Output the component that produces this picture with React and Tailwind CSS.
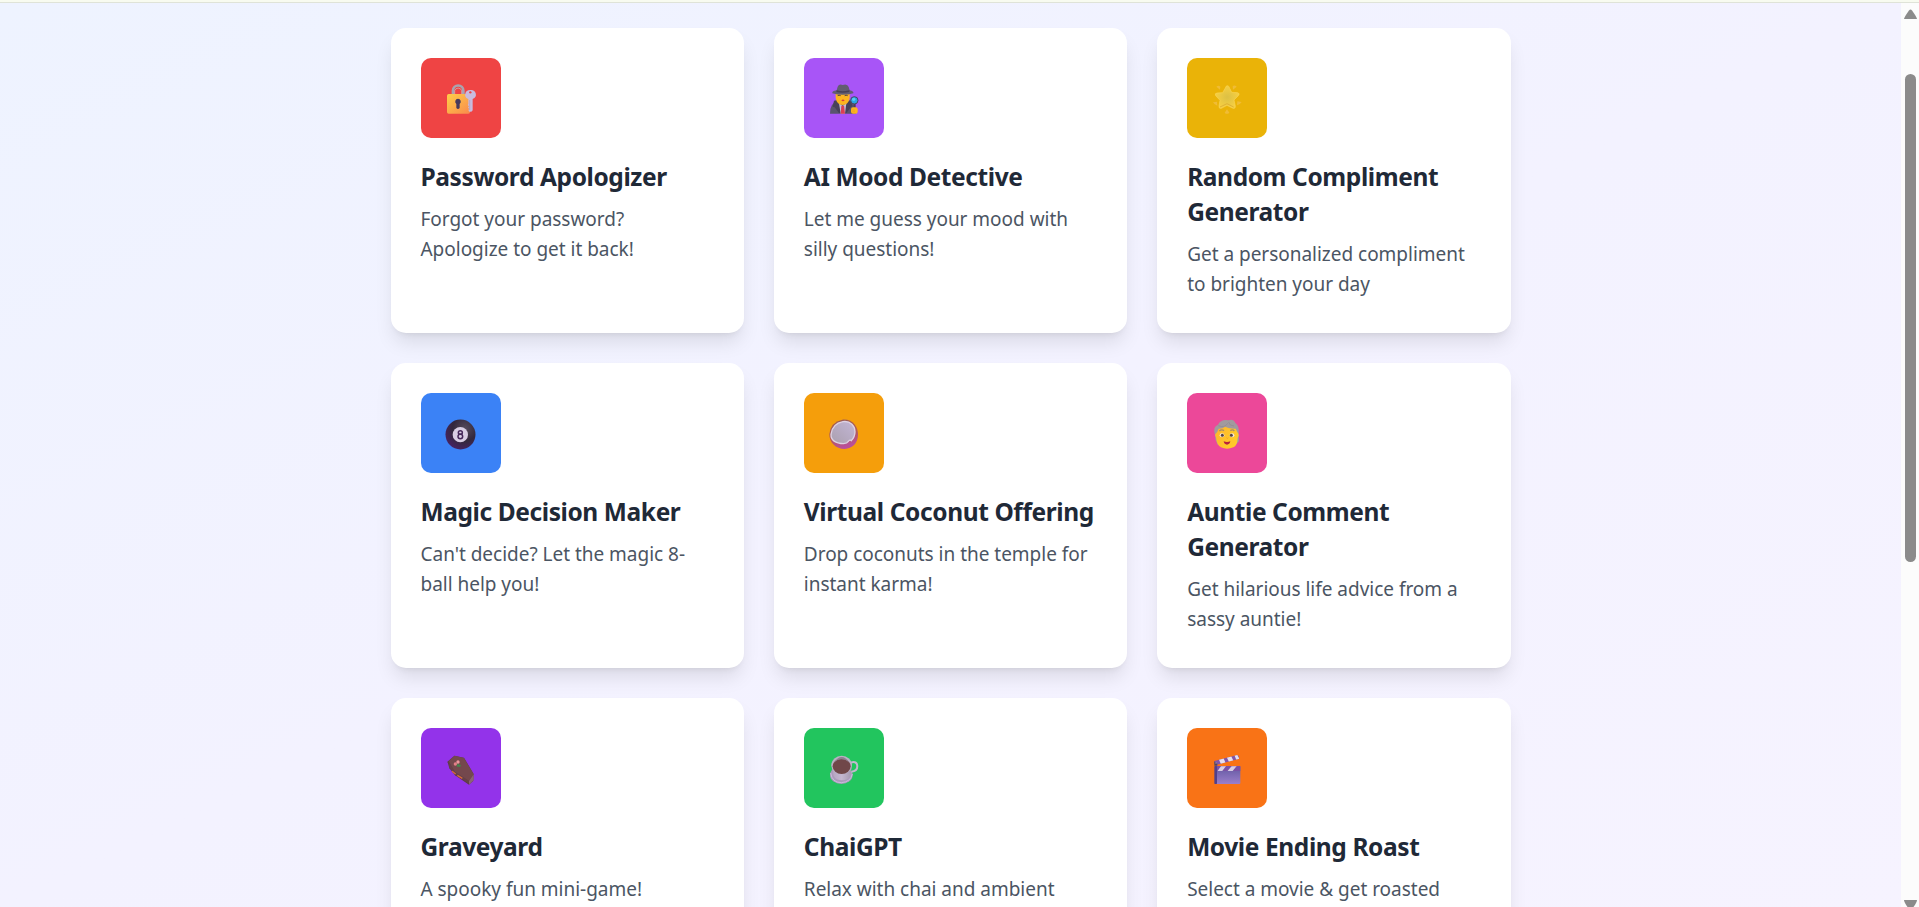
const LockIcon = () => (
  <>
    <defs>
      <linearGradient id="lock" x1="0" y1="0" x2="1" y2="1">
        <stop offset="0" stopColor="#ffcf48" />
        <stop offset="1" stopColor="#f98a4c" />
      </linearGradient>
    </defs>
    <path d="M69 74V62a15 15 0 0 1 31 0v12" fill="none" stroke="#aaa3ae" strokeWidth="8" />
    <path d="M74 72V62a11 11 0 0 1 21 0v10" fill="none" stroke="#c9bfc8" strokeWidth="2" />
    <rect x="51" y="72" width="69" height="59" rx="5" fill="url(#lock)" />
    <path d="M84 86a9 9 0 0 1 5 16v12q-5 6-10 0v-12a9 9 0 0 1 5-16Z" fill="#463b5c" />
    <path d="M121 60a15 14 0 0 1 7 27v34q-3 6-10 4l-3-5 3-3-4-4 3-4-4-4 2-3V87a15 14 0 0 1 6-27Z" fill="#c9bbdd" />
    <circle cx="121" cy="67" r="3.5" fill="#ee4444" />
    <path d="M119 90v30" stroke="#aa9bc2" strokeWidth="2" />
  </>
);

const DetectiveIcon = () => (
  <>
    <path d="M48 131q0-32 22-37h38q17 6 18 37Z" fill="#59556e" />
    <path d="M60 92l10-2 14 39h-9L62 112l-6-2Z" fill="#474259" />
    <path d="M110 92l-7-2-15 39h9l14-18 5-2Z" fill="#474259" />
    <path d="M75 99l11 9 11-9-4 32H80Z" fill="#c5bdd8" />
    <path d="M82 107h8l3 24H80Z" fill="#db3f52" />
    <path d="M65 70h42v14q-3 20-21 21Q68 104 65 84Z" fill="#fdb51f" />
    <path d="M71 77q4-3 9 0M92 77q4-3 9 0" fill="none" stroke="#503b44" strokeWidth="3" />
    <path d="M82 91q5-5 10 0-5 6-10 0Z" fill="#d53c38" />
    <path d="M55 70q-2-7 13-9l3-11q4-9 15-5 14-5 18 6l3 10q13 3 11 9-32 9-63 0Z" fill="#625d72" />
    <path d="M68 61q17 6 38 0v5q-20 5-39 0Z" fill="#474055" />
    <path d="M122 98v18" stroke="#4d4056" strokeWidth="6" />
    <circle cx="121" cy="91" r="11" fill="#27a6e3" stroke="#4a4660" strokeWidth="3" />
    <circle cx="119" cy="88" r="5" fill="#5cc9f5" />
    <rect x="111" y="112" width="20" height="19" rx="6" fill="#fdb51f" />
    <path d="M113 120h10M113 125h10" stroke="#ec9720" strokeWidth="1.5" />
  </>
);

const StarIcon = () => (
  <>
    <defs>
      <radialGradient id="star">
        <stop offset="0" stopColor="#dcc044" />
        <stop offset="1" stopColor="#f6cf42" />
      </radialGradient>
    </defs>
    <path d="M91 47q5 0 7 8l6 12 18 1q8 2 2 9l-13 13 4 19q0 9-9 5L90 106l-17 9q-8 2-7-7l3-17-13-14q-4-7 4-8l17-1 8-14q2-7 6-7Z" fill="url(#star)" stroke="#f7d355" strokeWidth="2" strokeLinejoin="round" />
    <path d="M69 111l21-10 20 10" fill="none" stroke="#deb137" strokeWidth="3" />
    <path d="M58 50q7-6 12 0l-1 9Zm50 9-1-10q5-5 12 1ZM48 97l12-2 1 12q-9-2-13-10Zm72 9 1-12 13 2q-5 8-14 10Zm-37 22 7-10 7 10q-7 7-14 0Z" fill="#f0bc36" />
  </>
);

const EightBallIcon = () => (
  <>
    <defs>
      <radialGradient id="ball" cx=".65" cy=".3" r=".75">
        <stop offset="0" stopColor="#554b5b" />
        <stop offset=".55" stopColor="#33283c" />
        <stop offset="1" stopColor="#472262" />
      </radialGradient>
    </defs>
    <circle cx="91.500" cy="88.500" r="45" fill="url(#ball)" />
    <circle cx="91" cy="89" r="23" fill="#d9cee3" />
    <ellipse cx="91" cy="82.500" rx="6" ry="5.500" fill="none" stroke="#46285a" strokeWidth="4.500" />
    <ellipse cx="91" cy="94.500" rx="7" ry="6.500" fill="none" stroke="#46285a" strokeWidth="4.500" />
  </>
);

const CoconutIcon = () => (
  <>
    <defs>
      <linearGradient id="shell" x1="0" y1="0" x2=".3" y2="1">
        <stop offset="0" stopColor="#9b5f50" />
        <stop offset=".65" stopColor="#b35b5c" />
        <stop offset="1" stopColor="#b94f9d" />
      </linearGradient>
      <linearGradient id="flesh" x1="0" y1="1" x2="1" y2="0">
        <stop offset="0" stopColor="#aaa0ae" />
        <stop offset="1" stopColor="#c3b5d6" />
      </linearGradient>
    </defs>
    <path d="M46 87q4-36 39-43c31-3 47 22 47 44 0 28-18 43-40 44-27 0-47-20-46-45Z" fill="url(#shell)" />
    <path d="M51 88q4-32 36-38c23-3 36 13 36 30q0 15-11 27-4-4-9 2-4 6-14 7c-25-1-39-10-38-28Z" fill="url(#flesh)" stroke="#ddd2e4" strokeWidth="4" />
  </>
);

const AuntieIcon = () => (
  <>
    <defs>
      <linearGradient id="face" x1="0" y1="0" x2="1" y2=".5">
        <stop offset="0" stopColor="#ffb52d" />
        <stop offset="1" stopColor="#ffcc29" />
      </linearGradient>
    </defs>
    <path d="M54 89q-8-24 9-30 9-17 31-13 15-6 21 8 13 8 10 33l1 22-10 10H62l-7-16Z" fill="#a19a9e" />
    <path d="M58 84q3-3 7-13 12 1 19-6 14 7 32 6 4 9 8 15 3 5-2 13-1 24-13 28-19 8-37 0-13-6-15-30-6-8 1-13Z" fill="url(#face)" />
    <path d="M67 78q7-6 14-1M100 77q7-5 12 1" fill="none" stroke="#a98b65" strokeWidth="4" />
    <ellipse cx="75" cy="91" rx="7" ry="6" fill="#f5e9df" />
    <ellipse cx="105" cy="91" rx="7" ry="6" fill="#f5e9df" />
    <circle cx="76" cy="91" r="4.500" fill="#574244" />
    <circle cx="103" cy="91" r="4.500" fill="#574244" />
    <path d="M88 98q3 5 6 0" fill="none" stroke="#ed942b" strokeWidth="2" />
    <path d="M80 109q10 4 20 0-2 10-10 10t-10-10Z" fill="#b8233d" />
    <path d="M64 62q19 8 28-7M95 51q2 12 16 12" fill="none" stroke="#8f898c" strokeWidth="2" />
  </>
);

const CoffinIcon = () => (
  <>
    <path d="M54 64l19-17 29 6 29 49-1 20-13 12-42-28-17-21-5-18Z" fill="#5d3d46" />
    <path d="M56 64l18-17 28 7 29 49-14 20-43-27Z" fill="#74484d" />
    <path d="M56 65l2 17 17 21 42 28v-8L75 95Z" fill="#664148" />
    <path d="M117 123l14-20v18l-14 13Z" fill="#8b6473" />
    <path d="M66 94l11 8M82 106l15 9" stroke="#d96a38" strokeWidth="4" />
    <path d="M84 81l-5-9M86 80l-3-11" stroke="#45834d" strokeWidth="3" />
    <path d="M79 76q6-4 14-1l-3 7Z" fill="#44844c" />
    <circle cx="76" cy="72" r="5" fill="#e47f88" />
    <circle cx="84" cy="66" r="5" fill="#ed949b" />
  </>
);

const CupIcon = () => (
  <>
    <defs>
      <linearGradient id="cup" x1="0" y1="0" x2="1" y2="0">
        <stop offset="0" stopColor="#b4a3be" />
        <stop offset=".5" stopColor="#c4b7d0" />
        <stop offset="1" stopColor="#a397ad" />
      </linearGradient>
    </defs>
    <ellipse cx="82" cy="105" rx="34" ry="27" fill="#ac9abc" />
    <path d="M50 99q4 29 32 29 28-2 33-26" fill="none" stroke="#cbbcdc" strokeWidth="3" />
    <path d="M110 68q19-6 20 10 0 16-18 17" fill="none" stroke="#c3b8ce" strokeWidth="6" />
    <path d="M52 74h62l-5 34q-7 13-25 13t-25-13Z" fill="url(#cup)" />
    <ellipse cx="83" cy="75" rx="31" ry="28" fill="#bbb0c4" />
    <ellipse cx="83" cy="79" rx="27" ry="23" fill="#704749" />
    <path d="M59 68q23-20 48 0-12-17-24-17T59 68Z" fill="#8d818e" />
  </>
);

const ClapperIcon = () => (
  <>
    <defs>
      <linearGradient id="board" x1="0" y1="0" x2="0" y2="1">
        <stop offset="0" stopColor="#6157a0" />
        <stop offset="1" stopColor="#9b7fcb" />
      </linearGradient>
      <clipPath id="arm"><path d="M52 63l69-18 6 11-70 19Z" /></clipPath>
      <clipPath id="bar"><path d="M55 79h75v14H55Z" /></clipPath>
    </defs>
    <rect x="54" y="78" width="76" height="54" rx="3" fill="url(#board)" />
    <path d="M52 63l69-18q6 2 6 11L57 75q-5-2-5-12Z" fill="#8256a8" />
    <g clipPath="url(#arm)" fill="#e6deef">
      <path d="M65 57l14-4 8 18-14 4Zm24-6 13-4 8 17-13 4Zm23-6 10-3 8 17-11 3Z" />
    </g>
    <rect x="55" y="78" width="75" height="15" fill="#7b51a5" />
    <g clipPath="url(#bar)" fill="#d9cee4">
      <path d="M73 77h15L75 94H61Zm32 0h15l-14 17H91Z" />
    </g>
    <path d="M52 64l9 7v6h-9Z" fill="#50455f" />
    <rect x="52" y="78" width="8" height="54" rx="2" fill="#51408a" />
    <circle cx="57" cy="69" r="2" fill="#a99bae" />
  </>
);

const cards = [
  { title: ["Password Apologizer"], text: ["Forgot your password?", "Apologize to get it back!"], tile: "bg-[#ef4444] pl-[9.5px]", Icon: LockIcon },
  { title: ["AI Mood Detective"], text: ["Let me guess your mood with", "silly questions!"], tile: "bg-[#a855f7] pl-[10.5px]", Icon: DetectiveIcon },
  { title: ["Random Compliment", "Generator"], text: ["Get a personalized compliment", "to brighten your day"], tile: "bg-[#eab308] pl-[10px]", Icon: StarIcon },
  { title: ["Magic Decision Maker"], text: ["Can't decide? Let the magic 8-", "ball help you!"], tile: "bg-[#3b82f6] pl-[9.5px]", Icon: EightBallIcon },
  { title: ["Virtual Coconut Offering"], text: ["Drop coconuts in the temple for", "instant karma!"], tile: "bg-[#f59e0b] pl-[10.5px]", Icon: CoconutIcon },
  { title: ["Auntie Comment", "Generator"], text: ["Get hilarious life advice from a", "sassy auntie!"], tile: "bg-[#ec4899] pl-[10px]", Icon: AuntieIcon },
  { title: ["Graveyard"], text: ["A spooky fun mini-game!"], tile: "bg-[#9333ea] pl-[9.5px]", Icon: CoffinIcon },
  { title: ["ChaiGPT"], text: ["Relax with chai and ambient"], tile: "bg-[#22c55e] pl-[10.5px]", Icon: CupIcon },
  { title: ["Movie Ending Roast"], text: ["Select a movie & get roasted"], tile: "bg-[#f97316] pl-[10px]", Icon: ClapperIcon },
];

function Card({ title, text, tile, Icon }) {
  return (
    <article className="h-[305px] rounded-[15px] bg-white p-[30px] shadow-[0_12.5px_18.75px_-3.75px_rgba(0,0,0,0.1),0_5px_7.5px_-5px_rgba(0,0,0,0.1)]">
      <div className={`mb-[21px] h-20 w-20 rounded-[10px] pt-3 ${tile}`}>
        <svg viewBox="0 0 180 180" className="h-[60px] w-[60px]"><Icon /></svg>
      </div>
      <h3 className="mb-2.5 text-[24.5px] leading-[35px] font-bold tracking-[-0.4px] whitespace-nowrap text-[#1f2937]">
        {title.map((line) => <span key={line} className="block">{line}</span>)}
      </h3>
      <p className="text-[19px] leading-[30px] tracking-[-0.02px] whitespace-nowrap text-[#4b5563]">
        {text.map((line) => <span key={line} className="block">{line}</span>)}
      </p>
    </article>
  );
}

export default function App() {
  return (
    <div className="flex h-[907px] flex-col overflow-hidden font-['Noto_Sans',sans-serif]">
      <div className="h-[3px] shrink-0 border-b border-[#dfe3d8] bg-[#f8fbf0]" />
      <div className="flex min-h-0 flex-1">
        <main className="flex min-w-0 flex-1 justify-center overflow-hidden bg-linear-to-br from-[#eef3ff] via-[#f3f2ff] to-[#f6f3ff] pt-[25px]">
          <div className="grid w-[1120px] grid-cols-3 content-start gap-[30px]">
            {cards.map((card) => <Card key={card.title[0]} {...card} />)}
          </div>
        </main>
        <div className="flex w-[18px] shrink-0 flex-col items-center overflow-hidden bg-[#fcfcfc]">
          <svg viewBox="0 0 13 10" className="mt-[6px] ml-px h-[10px] w-[13px] shrink-0"><path d="M0 10Q0 8.500 5 1.500q1.500-2 3 0 5 7 5 8.500Z" fill="#8b8b8b" /></svg>
          <div className="mt-[55px] ml-px h-[488px] w-[11px] shrink-0 rounded-[5.5px] bg-[#8b8b8b]" />
          <svg viewBox="0 0 13 7" className="mt-auto ml-px h-[7px] w-[13px] shrink-0"><path d="M0 0h13q0 2-3.500 7h-6Q0 2 0 0Z" fill="#8b8b8b" /></svg>
        </div>
      </div>
    </div>
  );
}
